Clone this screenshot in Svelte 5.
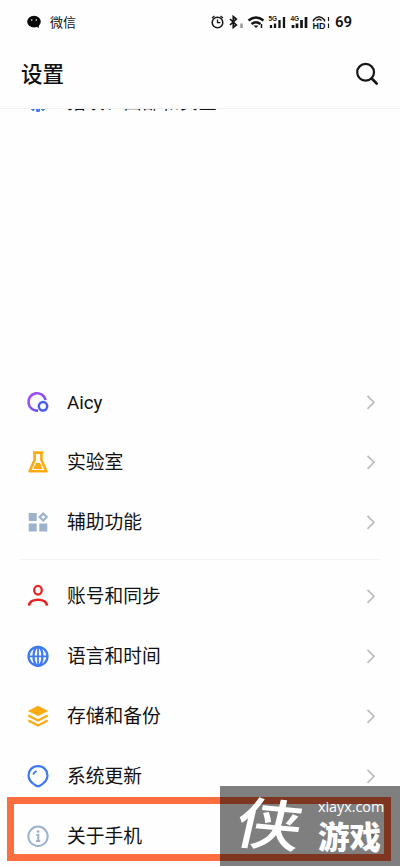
<script>
  const groups = [
    [
      { icon: 'aicy', label: 'Aicy' },
      { icon: 'lab', label: '实验室' },
      { icon: 'access', label: '辅助功能' }
    ],
    [
      { icon: 'account', label: '账号和同步' },
      { icon: 'globe', label: '语言和时间' },
      { icon: 'storage', label: '存储和备份' },
      { icon: 'update', label: '系统更新' },
      { icon: 'about', label: '关于手机' }
    ]
  ];
</script>

{#snippet glyph(name)}
  <svg class="icon" viewBox="0 0 24 24" fill="none">
    {#if name === 'aicy'}
      <defs>
        <linearGradient id="violet" x1="0" y1="0" x2="1" y2="1">
          <stop offset="0" stop-color="#b050f4" />
          <stop offset="1" stop-color="#5a50f2" />
        </linearGradient>
      </defs>
      <path d="M12 20.600A8.700 8.700 0 1 1 19.600 10" stroke="url(#violet)" stroke-width="2.600" />
      <circle cx="17" cy="16.300" r="4.200" stroke="#4a5cf2" stroke-width="2.500" />
    {:else if name === 'lab'}
      <path d="M7 2.600h10M8.600 3v7L3.600 21.300h16.800L15.400 10V3" stroke="#fbaa12" stroke-width="2.600" stroke-linejoin="round" />
      <path d="M10 13h4l2.800 6H7.200z" fill="#fbaa12" />
    {:else if name === 'access'}
      <path d="M2.700 3h8v8h-8zM2.700 13.500h8v8h-8zM13.300 13.500h8v8h-8z" fill="#9db2cd" />
      <path d="M17.200 3.500l3.500 3.500-3.500 3.500-3.500-3.500z" stroke="#9db2cd" stroke-width="2.200" />
    {:else if name === 'account'}
      <ellipse cx="12" cy="6.200" rx="3.800" ry="4.300" stroke="#e52322" stroke-width="2.300" />
      <path d="M3 21.700c.5-8 17.500-8 18 0" stroke="#e52322" stroke-width="2.600" />
    {:else if name === 'globe'}
      <g stroke="#3e7af0" stroke-width="2.300">
        <circle cx="12" cy="12.300" r="9.500" />
        <ellipse cx="12" cy="12.300" rx="4.500" ry="9.500" />
        <path d="M2 12.300h20M12 2v20" stroke-width="1.700" />
      </g>
    {:else if name === 'storage'}
      <path d="M12 1.800l10.200 5.100L12 12 1.800 6.900z" fill="#fbaa12" />
      <path d="M2.300 11.500l9.700 5 9.700-5M2.300 16.500l9.700 5 9.700-5" stroke="#fbaa12" stroke-width="2.200" />
    {:else if name === 'update'}
      <path d="M12 2.200c5.700 0 9.500 4 9.500 9.200 0 5-4.300 8.300-7.700 10.300-1.200.7-2.400.7-3.600 0C6.800 19.700 2.500 16.400 2.500 11.400 2.500 6.200 6.300 2.200 12 2.200z" stroke="#3f78f2" stroke-width="2.200" />
      <path d="M7.500 9.800q.8-1.600 2.500-2.400" stroke="#3f78f2" stroke-width="1.800" stroke-linecap="round" />
    {:else}
      <circle cx="12" cy="12.300" r="9.700" stroke="#9db2cd" stroke-width="2" />
      <path d="M10.300 11h2v6M10 17.100h4.200" stroke="#9db2cd" stroke-width="2" />
      <circle cx="12" cy="7.600" r="1.400" fill="#9db2cd" />
    {/if}
  </svg>
{/snippet}

<div class="screen">
  <header>
    <div class="status">
      <svg class="chat" viewBox="0 0 14 14">
        <ellipse cx="7" cy="6.600" rx="6.800" ry="5.900" fill="#080808" />
        <path d="M9 11l2.700 2.200L12 9z" fill="#080808" />
        <circle cx="4.700" cy="5" r=".8" fill="#fff" />
        <circle cx="9.300" cy="5" r=".8" fill="#fff" />
      </svg>
      <span class="app">微信</span>
      <svg class="tray" viewBox="0 0 120 18" fill="none" stroke="#151515">
        <circle cx="7.500" cy="9.500" r="5.300" stroke-width="1.500" />
        <path d="M7.500 6.500v3.200h2.800M2 5l2.500-2M13 5l-2.500-2" stroke-width="1.300" />
        <path d="M20 6l6.300 6-3 2.500V3.500l3 2.500L20 12" stroke-width="1.700" />
        <path d="M31.500 10.500v4.500" stroke="#999" stroke-width="2.500" />
        <path d="M38.500 7.500q7.500-6 15 0" stroke-width="2.500" />
        <path d="M41.500 11q4.500-3.600 9 0" stroke-width="2.400" />
        <path d="M43.500 12.500h5L46 15z" fill="#151515" stroke="none" />
        <path d="M51.500 11v4" stroke-width="1.500" />
        <path d="M61 12v3M65 10.500v4.500M69.500 7v8M74 4v11" stroke-width="2.300" />
        <path d="M83 12v3M87 10.500v4.500M91.500 7v8M96 4v11" stroke-width="2.700" />
        <path d="M103.500 8.500V7q5.500-6.600 11 0v1.500M106.500 7.500q2.500-2.500 5 0" stroke-width="1.500" />
        <path d="M118.500 4v4M118.500 10.500V15" stroke-width="1.200" />
        <g fill="#151515" stroke="none" font-family="Liberation Sans, sans-serif" font-weight="bold">
          <text x="58.500" y="8" font-size="6.500">5G</text>
          <text x="80.500" y="8" font-size="6.500">4G</text>
          <text x="102.500" y="16" font-size="9">HD</text>
        </g>
      </svg>
      <span class="battery">69</span>
    </div>
    <div class="title">
      <h1>设置</h1>
      <svg class="search" viewBox="0 0 24 24" fill="none" stroke="#151515">
        <circle cx="10.600" cy="10.300" r="8.400" stroke-width="2.200" />
        <path d="M16.700 16.500l5 5" stroke-width="2.600" stroke-linecap="round" />
      </svg>
    </div>
  </header>

  <main>
    <div class="partial">
      <i class="dots"></i>
      <span>指纹、面部和安全</span>
    </div>
    {#each groups as group}
      <section>
        {#each group as item}
          <div class="row">
            {@render glyph(item.icon)}
            <span class="label">{item.label}</span>
            <svg class="arrow" viewBox="0 0 10 16" fill="none">
              <path d="M1.500 1.800L8 8.300l-6.500 6.500" stroke="#bdbdbd" stroke-width="1.700" />
            </svg>
          </div>
        {/each}
      </section>
    {/each}
  </main>

  <div class="highlight"></div>
  <div class="watermark">
    <span class="brush">侠</span>
    <div class="site">
      <span class="domain">xiayx.com</span>
      <span class="game">游戏</span>
    </div>
  </div>
</div>

<style>
  :global(body) { margin: 0; }
  .screen {
    position: relative;
    width: 400px;
    height: 866px;
    overflow: hidden;
    background: #fefefe;
    color: #111;
    font-family: Roboto, "Noto Sans CJK SC", sans-serif;
  }
  header {
    position: relative;
    z-index: 1;
    height: 109px;
    background: #fefefe;
    border-bottom: 1px solid #f1f1f1;
    box-sizing: border-box;
  }
  .status {
    display: flex;
    align-items: center;
    height: 44px;
    padding: 0 47px 0 27px;
  }
  .chat { width: 14px; height: 14px; }
  .app { margin-left: 9px; padding-top: 2px; font-size: 13px; line-height: 20px; }
  .tray { width: 120px; height: 18px; margin-left: auto; }
  .battery {
    width: 18px;
    margin-left: 5px;
    font-size: 15px;
    font-weight: 600;
  }
  .title {
    display: flex;
    align-items: center;
    justify-content: space-between;
    height: 60px;
    padding: 0 21px;
  }
  h1 { margin: 0; padding-top: 1px; font-size: 21.500px; font-weight: 500; line-height: 30px; }
  .search { width: 24px; height: 24px; }
  .partial {
    display: flex;
    align-items: center;
    height: 30px;
    margin-top: -23px;
    padding-left: 31px;
    font-size: 18.750px;
    line-height: 30px;
    white-space: nowrap;
  }
  .partial span { padding-top: 4px; }
  .dots {
    align-self: flex-end;
    width: 14px;
    height: 4px;
    margin: 0 22px 4px 0;
    background:
      radial-gradient(circle at 2px 1px, #4a80ee 1.500px, transparent 2px),
      radial-gradient(circle at 7px 2px, #4a80ee 2px, transparent 2.500px),
      radial-gradient(circle at 12px 1px, #4a80ee 1.500px, transparent 2px);
  }
  section:first-of-type { margin-top: 256px; }
  section + section { padding-top: 7px; }
  section + section::before {
    content: "";
    display: block;
    height: 1px;
    margin: 0 20px 6px;
    background: #f3f3f3;
  }
  .row {
    display: flex;
    align-items: center;
    height: 60px;
    padding: 0 24px 0 26px;
  }
  .icon { flex: none; width: 24px; height: 24px; }
  .label {
    flex: 1;
    margin-left: 17px;
    padding-top: 2px;
    font-size: 18.750px;
    line-height: 28px;
  }
  .arrow { width: 10px; height: 16px; }
  .highlight {
    position: absolute;
    left: 7px;
    top: 797px;
    width: 384px;
    height: 64px;
    box-sizing: border-box;
    border: 7px solid #fc6d40;
  }
  .watermark {
    position: absolute;
    right: 0;
    bottom: 0;
    display: flex;
    width: 180px;
    height: 80px;
    background: rgba(0, 0, 0, 0.5);
    color: #fff;
  }
  .brush {
    width: 58px;
    margin-left: 22px;
    font-size: 55px;
    font-weight: 500;
    line-height: 80px;
    transform: skewX(-8deg) rotate(5deg) scaleX(1.2);
  }
  .site {
    display: flex;
    flex-direction: column;
    margin-left: 18px;
  }
  .domain {
    margin-top: 11px;
    font: 14.300px/20px "Open Sans", sans-serif;
  }
  .game { font-size: 31.500px; font-weight: 900; line-height: 43px; }
</style>
